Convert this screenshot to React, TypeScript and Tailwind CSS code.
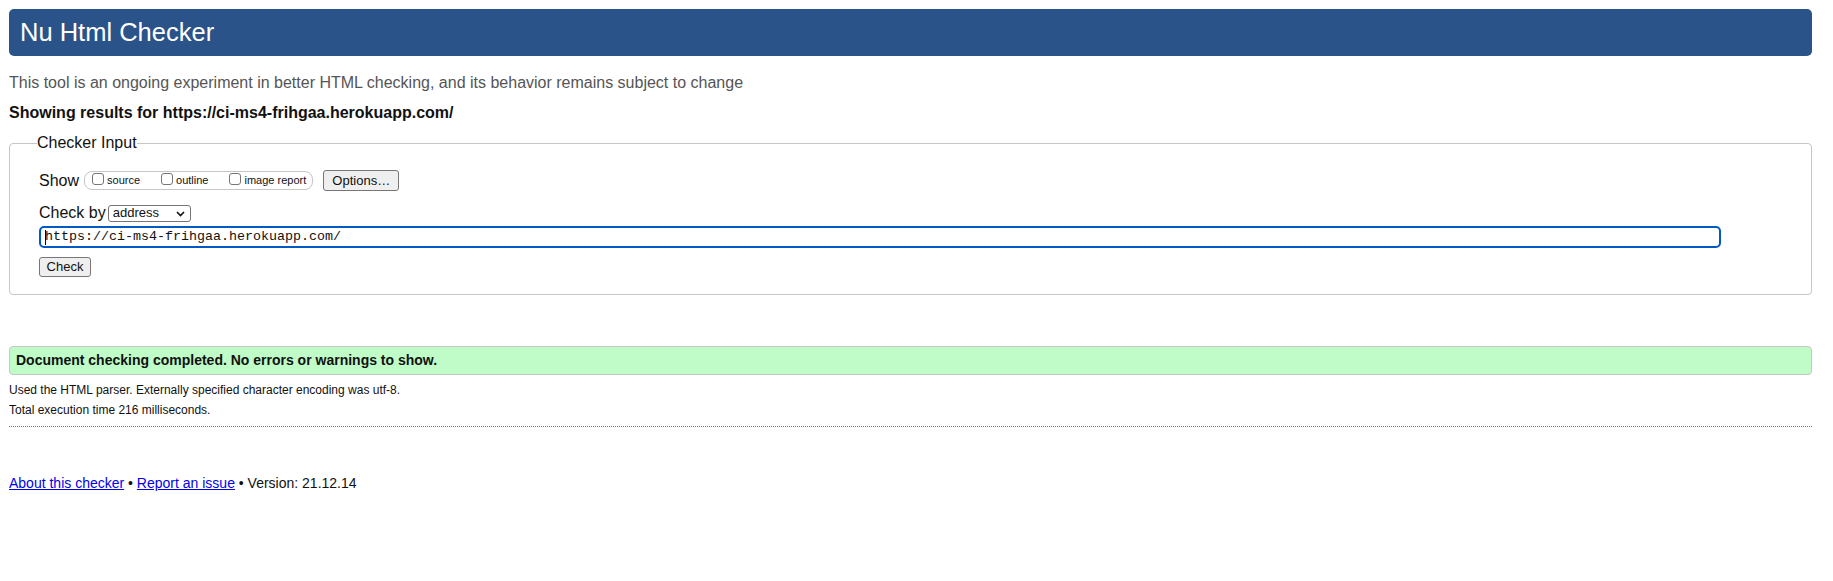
const checkboxes = ["source", "outline", "image report"];

function Checkbox({ label, last }: { label: string; last?: boolean }) {
  return (
    <label className={`flex items-center ${last ? "" : "mr-[21px]"}`}>
      <span className="mt-[-3px] mr-[3px] inline-block h-[12px] w-[12px] rounded-[3px] border border-[#767676] bg-white" />
      <span className="text-[11px] leading-[13px] text-[#111]">{label}</span>
    </label>
  );
}

function NativeButton({ children, className }: { children: React.ReactNode; className?: string }) {
  return (
    <button
      type="button"
      className={`flex items-center justify-center rounded-[3px] border border-[#767676] bg-[#efefef] text-[13px] text-[#111] ${className ?? ""}`}
    >
      {children}
    </button>
  );
}

export default function App() {
  return (
    <div className="min-h-screen bg-white pt-[9px] pl-[9px] pr-[21px] font-['Liberation_Sans',Arial,sans-serif] text-[#111]">
      <header className="flex h-[47px] items-center rounded-[5px] bg-[#2a5389] pl-[11px] text-[25.5px] text-white">
        Nu Html Checker
      </header>

      <p className="mt-[17px] text-[16px] leading-[20px] text-[#555]">
        This tool is an ongoing experiment in better HTML checking, and its behavior remains subject to change
      </p>
      <p className="mt-[10px] text-[16px] font-bold leading-[20px]">
        Showing results for https://ci-ms4-frihgaa.herokuapp.com/
      </p>

      <fieldset className="mt-[10px] rounded-[4px] border border-[#c6c6c6] pt-[17px] pr-[29px] pb-[17px] pl-[29px]">
        <legend className="-ml-[2px] px-0 text-[16px] leading-[20px]">Checker Input</legend>

        <div className="flex h-[21px] items-center">
          <span className="text-[16px] leading-[20px]">Show</span>
          <div className="ml-[5px] flex h-[19px] items-center rounded-[8px] border border-[#c6c6c6] pl-[7px] pr-[6px]">
            {checkboxes.map((c, i) => (
              <Checkbox key={c} label={c} last={i === checkboxes.length - 1} />
            ))}
          </div>
          <NativeButton className="ml-[10px] h-[21px] w-[76px]">Options…</NativeButton>
        </div>

        <div className="mt-[12px] flex h-[20px] items-center">
          <span className="text-[16px] leading-[20px]">Check by</span>
          <div className="ml-[2px] flex h-[17px] w-[83px] items-center justify-between rounded-[3px] border border-[#767676] bg-white pl-[4px] pr-[5px] text-[13px]">
            <span>address</span>
            <svg width="9" height="6" viewBox="0 0 9 6" className="mt-[1px]">
              <polyline points="1,1 4.5,4.5 8,1" fill="none" stroke="#111" strokeWidth="1.6" />
            </svg>
          </div>
        </div>

        <div className="mt-[3px] flex h-[22px] w-[1682px] items-center rounded-[5px] border-2 border-[#0059c5] bg-white pl-[4px] font-['Liberation_Mono',monospace] text-[13.33px]">
          <span className="mr-[-1px] inline-block h-[15px] w-[1px] bg-black" />
          https://ci-ms4-frihgaa.herokuapp.com/
        </div>

        <NativeButton className="mt-[9px] h-[20px] w-[52px]">Check</NativeButton>
      </fieldset>

      <div className="mt-[51px] flex h-[29px] items-center rounded-[4px] border border-[#c6c6c6] bg-[#bffcc7] pl-[6px] text-[14px] font-bold">
        Document checking completed. No errors or warnings to show.
      </div>
      <p className="mt-[8px] text-[12px] leading-[14px]">
        Used the HTML parser. Externally specified character encoding was utf-8.
      </p>
      <p className="mt-[6px] text-[12px] leading-[14px]">Total execution time 216 milliseconds.</p>
      <div className="mt-[9px] border-t border-dotted border-[#777]" />

      <p className="mt-[48px] text-[14px] leading-[16px]">
        <a href="#" className="text-[#0000ee] underline">
          About this checker
        </a>
        {" • "}
        <a href="#" className="text-[#0000ee] underline">
          Report an issue
        </a>
        {" • Version: 21.12.14"}
      </p>
    </div>
  );
}
